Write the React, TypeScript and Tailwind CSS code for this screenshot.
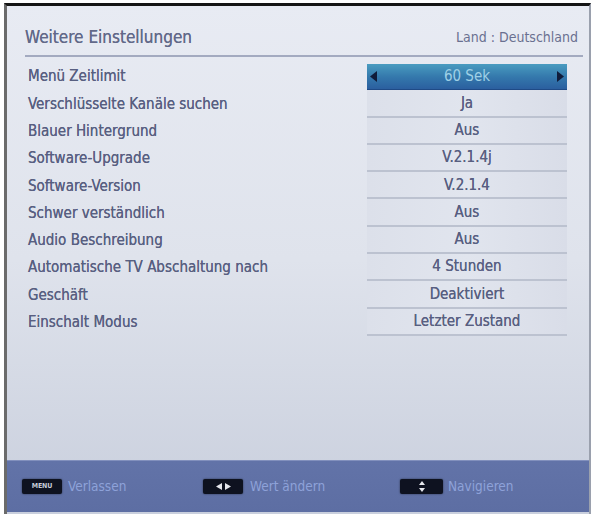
import React from 'react';

const rows: { label: string; value: string; active?: boolean }[] = [
  { label: 'Menü Zeitlimit', value: '60 Sek', active: true },
  { label: 'Verschlüsselte Kanäle suchen', value: 'Ja' },
  { label: 'Blauer Hintergrund', value: 'Aus' },
  { label: 'Software-Upgrade', value: 'V.2.1.4j' },
  { label: 'Software-Version', value: 'V.2.1.4' },
  { label: 'Schwer verständlich', value: 'Aus' },
  { label: 'Audio Beschreibung', value: 'Aus' },
  { label: 'Automatische TV Abschaltung nach', value: '4 Stunden' },
  { label: 'Geschäft', value: 'Deaktiviert' },
  { label: 'Einschalt Modus', value: 'Letzter Zustand' },
];

function Key({ children, w = 'w-[40px]' }: { children: React.ReactNode; w?: string }) {
  return (
    <div className={`${w} h-[15px] rounded-[2px] bg-[#0e1220] flex items-center justify-center gap-[3px] shadow-[0_0_2px_rgba(0,0,0,0.6)]`}>
      {children}
    </div>
  );
}

export default function App() {
  return (
    <div
      className="w-[598px] h-[517px] bg-white pt-[3px] pl-[4px] pr-[7px] pb-[3px]"
      style={{ fontFamily: '"DejaVu Sans Condensed", "DejaVu Sans", sans-serif' }}
    >
      <div className="h-full flex flex-col border-t-[3px] border-t-[#151515] border-l-[3px] border-l-[#6b6b6b] border-r-2 border-r-[#9aa0ad] bg-gradient-to-b from-[#e8ebf3] via-[#dfe3ec] to-[#c9cfdd]">
        {/* header */}
        <div className="ml-[18px] mr-[6px] h-[51px] flex items-end justify-between pb-[5px] border-b-2 border-b-[#a3aac0]">
          <span className="text-[17px] text-[#626989] [text-shadow:0_0_0.4px_#626989]">Weitere Einstellungen</span>
          <span className="text-[14px] text-[#6a7090] pr-[5px] pb-[2px]">Land : Deutschland</span>
        </div>

        {/* list */}
        <div className="flex flex-col mt-[6px]">
          {rows.map((r) => (
            <div key={r.label} className="h-[27.3px] flex items-center">
              <span className="pl-[21px] w-[360px] text-[15px] text-[#585f81] [text-shadow:0_0_0.4px_#585f81]">{r.label}</span>
              {r.active ? (
                <div className="w-[200px] h-[26px] flex items-center justify-between px-[3px] bg-gradient-to-b from-[#4a9cc0] via-[#3478ac] to-[#2a5d9e] shadow-[inset_0_-1px_0_#1f4a86]">
                  <svg width="7" height="11" viewBox="0 0 7 11">
                    <path d="M7 0 L0 5.5 L7 11 Z" fill="#101c3a" />
                  </svg>
                  <span className="text-[15px] text-[#9fd0e6]">{r.value}</span>
                  <svg width="7" height="11" viewBox="0 0 7 11">
                    <path d="M0 0 L7 5.5 L0 11 Z" fill="#101c3a" />
                  </svg>
                </div>
              ) : (
                <div className="w-[200px] h-[27.3px] flex items-center justify-center bg-gradient-to-r from-[#dce0ea] via-[#e1e5ee] to-[#d9dde8] border-b-2 border-b-[#bcc2d0]">
                  <span className="text-[15px] text-[#585f81] [text-shadow:0_0_0.4px_#585f81]">{r.value}</span>
                </div>
              )}
            </div>
          ))}
        </div>

        <div className="flex-1" />

        {/* footer */}
        <div className="h-[52px] mb-[2px] bg-gradient-to-b from-[#6273a8] to-[#5d6ea3] border-t border-t-[#8290bd] flex items-center pl-[15px] text-[13.5px] text-[#8ea2d9]">
          <div className="flex items-center gap-[6px] w-[181px]">
            <Key>
              <span className="text-[7px] font-bold text-[#c8ccd8] tracking-tight">MENU</span>
            </Key>
            <span>Verlassen</span>
          </div>
          <div className="flex items-center gap-[7px] w-[197px]">
            <Key>
              <svg width="6" height="7" viewBox="0 0 6 7">
                <path d="M6 0 L0 3.5 L6 7 Z" fill="#e6e8ee" />
              </svg>
              <svg width="6" height="7" viewBox="0 0 6 7">
                <path d="M0 0 L6 3.5 L0 7 Z" fill="#e6e8ee" />
              </svg>
            </Key>
            <span>Wert ändern</span>
          </div>
          <div className="flex items-center gap-[5px]">
            <Key w="w-[43px]">
              <svg width="6" height="11" viewBox="0 0 6 11">
                <path d="M3 0 L6 4 L0 4 Z M3 11 L6 7 L0 7 Z" fill="#e6e8ee" />
              </svg>
            </Key>
            <span>Navigieren</span>
          </div>
        </div>
      </div>
    </div>
  );
}
